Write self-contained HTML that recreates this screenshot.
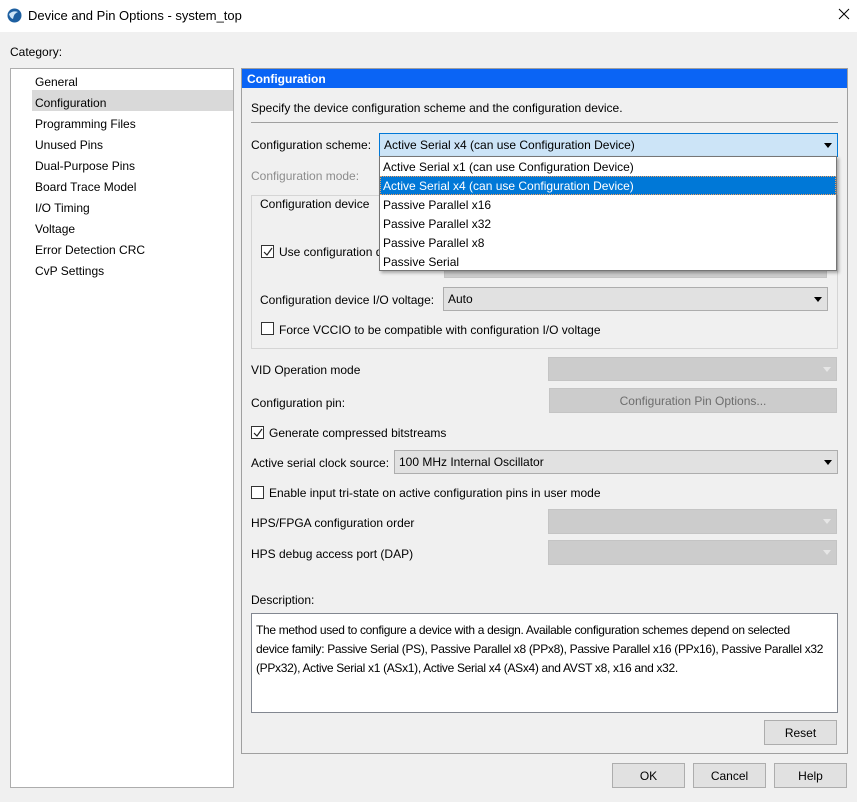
<!DOCTYPE html>
<html><head><style>
*{box-sizing:border-box;margin:0;padding:0}
body{width:857px;height:802px;background:#f0f0f0;font-family:"Liberation Sans",sans-serif;font-size:12px;color:#000;position:relative;overflow:hidden}
.a{position:absolute;white-space:nowrap}
.cb{position:absolute;width:13px;height:13px;border:1px solid #333;background:#fff}
.btn{position:absolute;background:#e1e1e1;border:1px solid #adadad;text-align:center;line-height:24px}
.dis{position:absolute;background:#cccccc;border:1px solid #c4c4c4}
.combo{position:absolute;background:#e1e1e1;border:1px solid #adadad;line-height:23px;padding-left:4px}
.arr{position:absolute;right:5px;top:9px;width:0;height:0;border-left:4px solid transparent;border-right:4px solid transparent;border-top:5px solid #000}
.darr{position:absolute;right:5px;top:9px;width:0;height:0;border-left:4px solid transparent;border-right:4px solid transparent;border-top:5px solid #e6e6e6}
</style></head><body>
<div class="a" style="left:0;top:0;width:857px;height:32px;background:#fff"></div>
<svg class="a" style="left:7px;top:8px" width="15" height="15"><circle cx="7.5" cy="7.5" r="7" fill="#1d5fa0"/><path d="M2 6 Q6 2 11 4 Q7 5 6 11 Q3 10 2 6Z" fill="#cfe6f7"/></svg>
<div class="a" style="left:28px;top:8px;font-size:13px">Device and Pin Options - system_top</div>
<svg class="a" style="left:838px;top:8px" width="12" height="12"><path d="M1 1L11 11M11 1L1 11" stroke="#000" stroke-width="1"/></svg>
<div class="a" style="left:10px;top:45px">Category:</div>
<div class="a" style="left:10px;top:68px;width:224px;height:720px;background:#fff;border:1px solid #adadad"></div>
<div class="a" style="left:32px;top:90px;width:201px;height:21px;background:#d9d9d9"></div>
<div class="a" style="left:35px;top:72px;line-height:21px">General<br>Configuration<br>Programming Files<br>Unused Pins<br>Dual-Purpose Pins<br>Board Trace Model<br>I/O Timing<br>Voltage<br>Error Detection CRC<br>CvP Settings</div>

<div class="a" style="left:241px;top:68px;width:607px;height:686px;border:1px solid #a0a0a0"></div>
<div class="a" style="left:242px;top:69px;width:605px;height:19px;background:#0a64f5;color:#fff;font-weight:bold;padding-left:5px;line-height:20px">Configuration</div>
<div class="a" style="left:251px;top:101px">Specify the device configuration scheme and the configuration device.</div>
<div class="a" style="left:251px;top:122px;width:587px;height:1px;background:#a0a0a0"></div>

<div class="a" style="left:251px;top:138px">Configuration scheme:</div>
<div class="a" style="left:251px;top:169px;color:#8c8c8c">Configuration mode:</div>

<div class="a" style="left:251px;top:195px;width:587px;height:154px;border:1px solid #d5d5d5"></div>
<div class="a" style="left:258px;top:197px;background:#f0f0f0;padding:0 2px">Configuration device</div>
<div class="cb" style="left:261px;top:245px"></div><svg class="a" style="left:262px;top:246px" width="12" height="12"><path d="M2 6L5 9L10 2" stroke="#222" fill="none" stroke-width="1.2"/></svg>
<div class="a" style="left:279px;top:245px">Use configuration d</div>
<div class="dis" style="left:444px;top:256px;width:383px;height:22px"></div>
<div class="a" style="left:260px;top:293px">Configuration device I/O voltage:</div>
<div class="combo" style="left:443px;top:287px;width:385px;height:24px">Auto<div class="arr"></div></div>
<div class="cb" style="left:261px;top:322px"></div>
<div class="a" style="left:279px;top:323px">Force VCCIO to be compatible with configuration I/O voltage</div>

<div class="combo" style="left:379px;top:133px;width:459px;height:24px;background:#cce4f7;border-color:#0078d7">Active Serial x4 (can use Configuration Device)<div class="arr"></div></div>
<div class="a" style="left:379px;top:156px;width:458px;height:115px;background:#fff;border:1px solid #767676;box-shadow:2px 2px 3px rgba(0,0,0,.3)"></div>
<div class="a" style="left:380px;top:176px;width:456px;height:19px;background:#0078d7;border:1px dotted #f0a060"></div>
<div class="a" style="left:383px;top:158px;line-height:19px">Active Serial x1 (can use Configuration Device)<br><span style="color:#fff">Active Serial x4 (can use Configuration Device)</span><br>Passive Parallel x16<br>Passive Parallel x32<br>Passive Parallel x8<br>Passive Serial</div>

<div class="a" style="left:251px;top:363px">VID Operation mode</div>
<div class="dis" style="left:548px;top:357px;width:289px;height:24px"><div class="darr"></div></div>
<div class="a" style="left:251px;top:396px">Configuration pin:</div>
<div class="dis" style="left:549px;top:388px;width:288px;height:25px;color:#6d6d6d;text-align:center;line-height:24px">Configuration Pin Options...</div>
<div class="cb" style="left:251px;top:426px"></div><svg class="a" style="left:252px;top:427px" width="12" height="12"><path d="M2 6L5 9L10 2" stroke="#222" fill="none" stroke-width="1.2"/></svg>
<div class="a" style="left:269px;top:426px">Generate compressed bitstreams</div>
<div class="a" style="left:251px;top:456px">Active serial clock source:</div>
<div class="combo" style="left:394px;top:450px;width:444px;height:24px">100 MHz Internal Oscillator<div class="arr"></div></div>
<div class="cb" style="left:251px;top:486px"></div>
<div class="a" style="left:269px;top:486px">Enable input tri-state on active configuration pins in user mode</div>
<div class="a" style="left:251px;top:516px">HPS/FPGA configuration order</div>
<div class="dis" style="left:548px;top:509px;width:289px;height:25px"><div class="darr"></div></div>
<div class="a" style="left:251px;top:547px">HPS debug access port (DAP)</div>
<div class="dis" style="left:548px;top:540px;width:289px;height:25px"><div class="darr"></div></div>

<div class="a" style="left:251px;top:593px">Description:</div>
<div class="a" style="left:251px;top:613px;width:587px;height:100px;background:#fff;border:1px solid #828790;padding:7px 2px 7px 4px;line-height:19px;letter-spacing:-0.32px;overflow:hidden">The method used to configure a device with a design. Available configuration schemes depend on selected<br>device family: Passive Serial (PS), Passive Parallel x8 (PPx8), Passive Parallel x16 (PPx16), Passive Parallel x32<br>(PPx32), Active Serial x1 (ASx1), Active Serial x4 (ASx4) and AVST x8, x16 and x32.</div>
<div class="btn" style="left:764px;top:720px;width:73px;height:25px">Reset</div>

<div class="btn" style="left:612px;top:763px;width:73px;height:25px">OK</div>
<div class="btn" style="left:693px;top:763px;width:73px;height:25px">Cancel</div>
<div class="btn" style="left:774px;top:763px;width:73px;height:25px">Help</div>
</body></html>
